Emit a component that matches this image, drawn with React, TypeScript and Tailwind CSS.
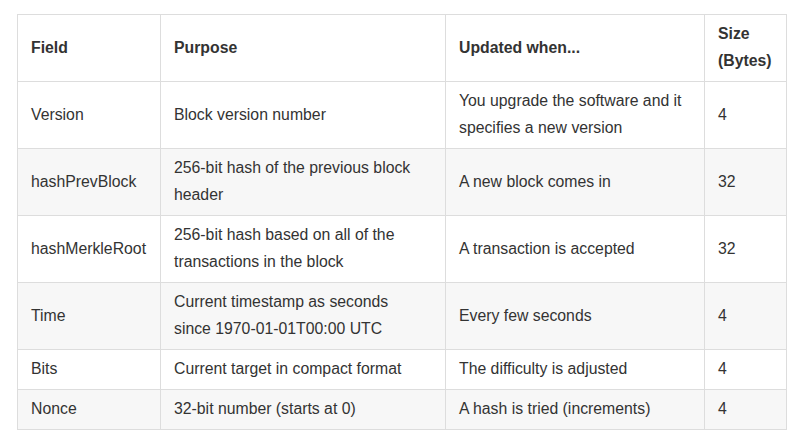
const rows = [
  ["Version", "Block version number", "You upgrade the software and it specifies a new version", "4"],
  ["hashPrevBlock", "256-bit hash of the previous block header", "A new block comes in", "32"],
  ["hashMerkleRoot", "256-bit hash based on all of the transactions in the block", "A transaction is accepted", "32"],
  ["Time", "Current timestamp as seconds since 1970-01-01T00:00 UTC", "Every few seconds", "4"],
  ["Bits", "Current target in compact format", "The difficulty is adjusted", "4"],
  ["Nonce", "32-bit number (starts at 0)", "A hash is tried (increments)", "4"],
];

const cell = "border border-[#dddddd] pl-[13px] pr-[18px] pt-[5px] pb-[7px] align-middle";

export default function App() {
  return (
    <div className="min-h-screen bg-white pl-[17px] pt-[14px] font-['Liberation_Sans',Arial,sans-serif] text-[15.8px] leading-[27px] text-[#333333]">
      <table className="w-[769px] table-fixed border-collapse">
        <colgroup>
          <col className="w-[143px]" />
          <col className="w-[285px]" />
          <col className="w-[259px]" />
          <col className="w-[82px]" />
        </colgroup>
        <thead>
          <tr className="bg-white">
            <th className={`${cell} text-left font-bold`}>Field</th>
            <th className={`${cell} text-left font-bold`}>Purpose</th>
            <th className={`${cell} text-left font-bold`}>Updated when...</th>
            <th className={`${cell} text-left font-bold`}>Size (Bytes)</th>
          </tr>
        </thead>
        <tbody>
          {rows.map((r, i) => (
            <tr key={r[0]} className={i % 2 === 1 ? "bg-[#f7f7f7]" : "bg-white"}>
              {r.map((c, j) => (
                <td key={j} className={cell}>
                  {c}
                </td>
              ))}
            </tr>
          ))}
        </tbody>
      </table>
    </div>
  );
}
